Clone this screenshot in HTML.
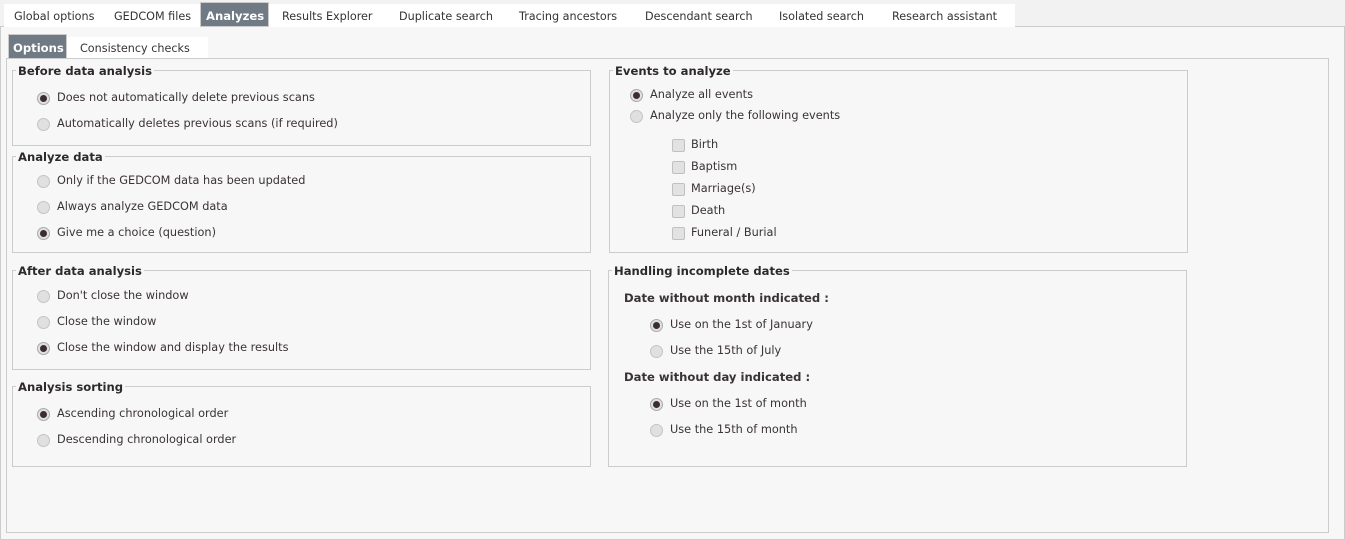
<!DOCTYPE html>
<html><head><style>
*{margin:0;padding:0;box-sizing:border-box}
body{width:1345px;height:540px;background:#f2f2f2;font-family:"DejaVu Sans","Liberation Sans",sans-serif;font-size:11.3px;color:#3a3333;position:relative;overflow:hidden}
.a{position:absolute;white-space:nowrap}
.tabs{position:absolute;left:4px;top:4px;width:1011px;height:23px;background:#fff}
.t{position:absolute;top:10px;font-size:11.2px;color:#333}
.act{position:absolute;background:#6f7a84;color:#fff;font-weight:bold;border:1px solid #ccc}
.outer{position:absolute;left:0;top:26px;width:1345px;height:514px;background:#f7f7f7;border:1px solid #ccc}
.inner{position:absolute;left:6px;top:58px;width:1323px;height:475px;border:1px solid #ccc}
.fs{position:absolute;border:1px solid #ccc}
.lg{position:absolute;background:#f7f7f7;font-weight:bold;font-size:11.6px;padding:0 2px;color:#2e2a2a}
.r{position:absolute;width:13px;height:13px;border-radius:50%;background:#e0e0e0;border:1px solid #c4c4c4}
.r.on{border-color:#aaa}
.r.on::after{content:"";position:absolute;left:2px;top:2px;width:7px;height:7px;border-radius:50%;background:#3b2d33}
.c{position:absolute;width:13px;height:13px;border:1px solid #c0c0c0;background:#e2e2e2;border-radius:2px}
</style></head><body>
<div class="outer"></div>
<div class="tabs"></div>
<div class="t a" style="left:14px">Global options</div>
<div class="t a" style="left:114px">GEDCOM files</div>
<div class="act a" style="left:200px;top:2px;width:69px;height:25px;padding:6px 0 0 5px;font-size:11.6px">Analyzes</div>
<div class="t a" style="left:282px">Results Explorer</div>
<div class="t a" style="left:399px">Duplicate search</div>
<div class="t a" style="left:519px">Tracing ancestors</div>
<div class="t a" style="left:645px">Descendant search</div>
<div class="t a" style="left:779px">Isolated search</div>
<div class="t a" style="left:892px">Research assistant</div>
<div class="a" style="left:67px;top:37px;width:141px;height:22px;background:#fff"></div>
<div class="act a" style="left:8px;top:34px;width:59px;height:25px;padding:6px 0 0 4px;font-size:11.6px">Options</div>
<div class="a" style="left:80px;top:42px;font-size:11.2px">Consistency checks</div>
<div class="inner"></div>

<div class="fs" style="left:12px;top:70px;width:579px;height:76px"></div>
<div class="lg a" style="left:16px;top:64px">Before data analysis</div>
<div class="fs" style="left:12px;top:156px;width:579px;height:97px"></div>
<div class="lg a" style="left:16px;top:150px">Analyze data</div>
<div class="fs" style="left:12px;top:270px;width:579px;height:100px"></div>
<div class="lg a" style="left:16px;top:264px">After data analysis</div>
<div class="fs" style="left:12px;top:386px;width:579px;height:81px"></div>
<div class="lg a" style="left:16px;top:380px">Analysis sorting</div>

<div class="fs" style="left:609px;top:70px;width:579px;height:183px"></div>
<div class="lg a" style="left:613px;top:64px">Events to analyze</div>
<div class="fs" style="left:608px;top:270px;width:579px;height:197px"></div>
<div class="lg a" style="left:612px;top:264px">Handling incomplete dates</div>

<div class="r on" style="left:37px;top:92px"></div><div class="a" style="left:57px;top:91px">Does not automatically delete previous scans</div>
<div class="r" style="left:37px;top:118px"></div><div class="a" style="left:57px;top:117px">Automatically deletes previous scans (if required)</div>
<div class="r" style="left:37px;top:175px"></div><div class="a" style="left:57px;top:174px">Only if the GEDCOM data has been updated</div>
<div class="r" style="left:37px;top:201px"></div><div class="a" style="left:57px;top:200px">Always analyze GEDCOM data</div>
<div class="r on" style="left:37px;top:227px"></div><div class="a" style="left:57px;top:226px">Give me a choice (question)</div>
<div class="r" style="left:37px;top:290px"></div><div class="a" style="left:57px;top:289px">Don't close the window</div>
<div class="r" style="left:37px;top:316px"></div><div class="a" style="left:57px;top:315px">Close the window</div>
<div class="r on" style="left:37px;top:342px"></div><div class="a" style="left:57px;top:341px">Close the window and display the results</div>
<div class="r on" style="left:37px;top:408px"></div><div class="a" style="left:57px;top:407px">Ascending chronological order</div>
<div class="r" style="left:37px;top:434px"></div><div class="a" style="left:57px;top:433px">Descending chronological order</div>

<div class="r on" style="left:630px;top:89px"></div><div class="a" style="left:650px;top:88px">Analyze all events</div>
<div class="r" style="left:630px;top:110px"></div><div class="a" style="left:650px;top:109px">Analyze only the following events</div>
<div class="c" style="left:672px;top:139px"></div><div class="a" style="left:691px;top:138px">Birth</div>
<div class="c" style="left:672px;top:161px"></div><div class="a" style="left:691px;top:160px">Baptism</div>
<div class="c" style="left:672px;top:183px"></div><div class="a" style="left:691px;top:182px">Marriage(s)</div>
<div class="c" style="left:672px;top:205px"></div><div class="a" style="left:691px;top:204px">Death</div>
<div class="c" style="left:672px;top:227px"></div><div class="a" style="left:691px;top:226px">Funeral / Burial</div>

<div class="a" style="left:624px;top:291px;font-weight:bold;font-size:11.6px">Date without month indicated :</div>
<div class="r on" style="left:650px;top:319px"></div><div class="a" style="left:670px;top:318px">Use on the 1st of January</div>
<div class="r" style="left:650px;top:345px"></div><div class="a" style="left:670px;top:344px">Use the 15th of July</div>
<div class="a" style="left:624px;top:370px;font-weight:bold;font-size:11.6px">Date without day indicated :</div>
<div class="r on" style="left:650px;top:398px"></div><div class="a" style="left:670px;top:397px">Use on the 1st of month</div>
<div class="r" style="left:650px;top:424px"></div><div class="a" style="left:670px;top:423px">Use the 15th of month</div>
</body></html>
